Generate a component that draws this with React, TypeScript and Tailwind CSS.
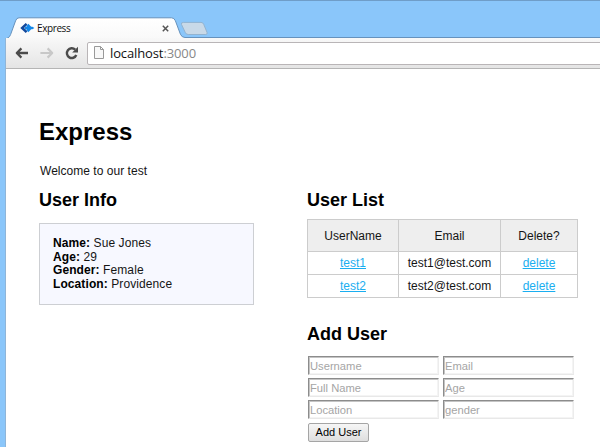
const users = [
  { name: 'test1', email: 'test1@test.com' },
  { name: 'test2', email: 'test2@test.com' },
];

const details = [
  ['Name', 'Sue Jones'],
  ['Age', '29'],
  ['Gender', 'Female'],
  ['Location', 'Providence'],
];

const fields = ['Username', 'Email', 'Full Name', 'Age', 'Location', 'gender'];

function TabStrip() {
  return (
    <div className="relative h-[38px] border-t border-[#6f9dc8]">
      <svg className="absolute left-0 -top-px" width="600" height="42" viewBox="0 0 600 42">
        <defs>
          <linearGradient id="tab" x1="0" y1="0" x2="0" y2="1">
            <stop offset="0" stopColor="#ffffff" />
            <stop offset="1" stopColor="#f8f8f8" />
          </linearGradient>
        </defs>
        <path d="M5.5 42V40.5Q5.7 38.3 8 37.8Q9.8 37 10.6 34.5L15.6 20.8Q16.6 17.8 19 17.8H171.5Q174.2 17.8 175.4 20.8L180.4 34.2Q181.8 37.5 185 37.5H600V42Z" fill="url(#tab)" />
        <path d="M5.5 42V40.5Q5.7 38.3 8 37.8Q9.8 37 10.6 34.5L15.6 20.8Q16.6 17.8 19 17.8H171.5Q174.2 17.8 175.4 20.8L180.4 34.2Q181.8 37.5 185 37.5H600" fill="none" stroke="#6692bd" strokeWidth="1" />
        <path d="M183.3 22.4H201Q203 22.4 203.7 24.3L207 32.3Q207.8 34.5 205.8 34.5H188.2Q186 34.5 185.2 32.3L181.5 24.5Q180.8 22.4 183.3 22.4Z" fill="#c8d9e8" stroke="#92b3d0" strokeWidth="1" />
      </svg>
      <div className="relative flex items-center w-[170px] ml-5 pt-[17px] h-[37px]">
        <svg width="15" height="12" viewBox="0 0 15 12" className="shrink-0">
          <path d="M6.6 1.9L2.2 6L6.6 10.1" fill="none" stroke="#14499c" strokeWidth="2.6" />
          <path d="M8.3 1.8L11.2 4.8H12.4L14.4 6L12.4 7.2H11.2L8.3 10.2L6.6 8V7.2H5V4.8H6.6V4Z" fill="#1487e8" />
        </svg>
        <span className="ml-[2px] text-[10px] leading-none text-[#111] font-['Open_Sans',sans-serif] tracking-[-0.4px]">Express</span>
        <svg width="7" height="7" viewBox="0 0 7 7" className="ml-auto mr-[21px]">
          <path d="M.8.8L6.2 6.2M6.2.8L.8 6.2" stroke="#555" strokeWidth="1.5" />
        </svg>
      </div>
    </div>
  );
}

function Toolbar() {
  return (
    <div className="relative ml-[5px] h-[31px] flex items-center bg-linear-to-b from-[#f8f8f8] to-[#e4e4e4] border-l border-[#8fb5d8]">
      <svg width="66" height="16" viewBox="0 0 66 16" className="ml-[9px] -mt-px shrink-0" fill="none">
        <path d="M13 8H2.2M6.4 3.4L1.8 8L6.4 12.6" stroke="#4b4b4b" strokeWidth="2.3" strokeLinejoin="round" />
        <path d="M25.4 8H36.4M32.6 3.4L37.2 8L32.6 12.6" stroke="#c8c8c8" strokeWidth="2.2" strokeLinejoin="round" />
        <path d="M60.2 4.6A4.9 4.9 0 1 0 61.3 10" stroke="#4b4b4b" strokeWidth="2.4" />
        <path d="M63 1.8V7.6H57.2Z" fill="#4b4b4b" />
      </svg>
      <div className="ml-[6px] flex-1 h-[23px] -mr-2 -mt-px flex items-center bg-white border border-[#b9b5b7] rounded-[2px]">
        <svg width="11" height="14" viewBox="0 0 11 14" className="ml-[6px]" fill="#f8f8f8" stroke="#999">
          <path d="M.5 .5H6.5L9.5 3.5V12.5H.5ZM6.5 .5V3.5H9.5" />
        </svg>
        <span className="ml-[5px] text-[13px] leading-none font-['Open_Sans',sans-serif] tracking-[-0.12px] text-[#111]">
          localhost<span className="text-[#888]">:3000</span>
        </span>
      </div>
      <div className="absolute inset-x-0 bottom-0 h-px bg-[#b5b5b5]" />
    </div>
  );
}

export default function App() {
  return (
    <div className="w-[600px] h-[447px] overflow-hidden bg-[#8ac6fa]">
      <TabStrip />
      <Toolbar />
      <main className="ml-[5px] h-[378px] border-l border-[#8fb5d8] bg-white pl-[34px] text-[12px] text-[#151515] font-['Liberation_Sans',Arial,sans-serif]">
        <h1 className="-ml-px pt-[49px] text-[24px] leading-7 font-bold text-black">Express</h1>
        <p className="mt-[17px] leading-[16px] tracking-[0.03px]">Welcome to our test</p>
        <div className="flex">
          <section className="w-[267px] pt-[10px]">
            <h2 className="-ml-px text-[18px] leading-[22px] font-bold text-black">User Info</h2>
            <div className="-ml-px mt-[12px] w-[215px] h-[82px] border border-[#cdcfd3] bg-[#f7f8ff] pl-[13px] pt-[13px] leading-[13.7px] tracking-[0.09px]">
              {details.map(([label, value]) => (
                <p key={label}><strong className="text-black">{label}:</strong> {value}</p>
              ))}
            </div>
          </section>
          <section className="pt-[10px]">
            <h2 className="text-[18px] leading-[22px] font-bold text-black">User List</h2>
            <table className="mt-[8px] w-[271px] table-fixed border-collapse text-center [&_td]:border [&_td]:border-[#ccc] [&_td]:p-0 [&_th]:border [&_th]:border-[#ccc] [&_th]:p-0">
              <colgroup>
                <col className="w-[91px]" />
                <col className="w-[102px]" />
                <col className="w-[77px]" />
              </colgroup>
              <thead>
                <tr className="h-[32px] bg-[#eee]">
                  <th className="font-normal">UserName</th>
                  <th className="font-normal">Email</th>
                  <th className="font-normal">Delete?</th>
                </tr>
              </thead>
              <tbody>
                {users.map((u) => (
                  <tr key={u.name} className="h-[23px]">
                    <td><a href="#" className="text-[#1aaef0] underline">{u.name}</a></td>
                    <td>{u.email}</td>
                    <td><a href="#" className="text-[#1aaef0] underline">delete</a></td>
                  </tr>
                ))}
              </tbody>
            </table>
            <h2 className="mt-[25px] text-[18px] leading-[22px] font-bold text-black">Add User</h2>
            <form className="mt-[11px] ml-px">
              <div className="grid grid-cols-[131px_131px] gap-x-[4px] gap-y-[3px]">
                {fields.map((f) => (
                  <input
                    key={f}
                    placeholder={f}
                    className="h-[19px] min-w-0 border border-t-[#8c8c8c] border-l-[#8c8c8c] border-r-[#ececec] border-b-[#e8e8e8] bg-white px-px text-[11.2px] leading-[15px] shadow-[inset_1px_1px_0_#c4c4c4,inset_-1px_-1px_0_#f4f4f4] placeholder:text-[#a5a5a5]"
                  />
                ))}
              </div>
              <button type="button" className="mt-[4px] block w-[61px] h-[19px] rounded-[2px] border border-[#a5a5a5] bg-linear-to-b from-[#f6f6f6] to-[#dedede] text-[11px] leading-[17px] text-black">
                Add User
              </button>
            </form>
          </section>
        </div>
      </main>
    </div>
  );
}
